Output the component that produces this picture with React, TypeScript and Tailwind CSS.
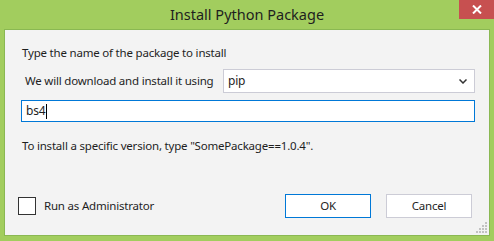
import React from "react";

const font = { fontFamily: '"Noto Sans", "Open Sans", sans-serif' };

export default function App() {
  return (
    <div className="w-[494px] h-[241px] bg-[#a2cd5e] flex flex-col relative overflow-hidden" style={font}>
      <div className="h-[29px] relative flex items-center justify-center">
        <span className="text-[14.5px] leading-[20px] text-[#1e1e1e] -mt-[2px]">Install Python Package</span>
        <div className="absolute right-0 top-0 w-[35px] h-[19px] bg-[#c75050] flex items-center justify-center">
          <svg width="10" height="9" viewBox="0 0 10 9">
            <path d="M1 0.5 L9 8.5 M9 0.5 L1 8.5" stroke="#fff" strokeWidth="2" />
          </svg>
        </div>
      </div>
      <div className="mx-[4px] h-[207px] bg-[#f3f3f3] border border-[#8ab852] flex flex-col relative">
        <div className="pl-[16px] pr-[14px] pt-[15px] flex flex-col text-[11.5px] tracking-[-0.2px] leading-[16px] text-[#1e1e1e]">
          <div className="pl-[1px]">Type the name of the package to install</div>
          <div className="mt-[8px] flex items-center h-[24px]">
            <div className="pl-[4px] w-[202px] whitespace-nowrap">We will download and install it using</div>
            <div className="flex-1 h-[24px] bg-white border border-[#ccccd6] flex items-center justify-between pl-[4px] pr-[7px]">
              <span className="text-[12px]">pip</span>
              <svg width="8" height="5" viewBox="0 0 8 5">
                <path d="M0.5 0.5 L4 4 L7.5 0.5" stroke="#333" strokeWidth="1.5" fill="none" />
              </svg>
            </div>
          </div>
          <div className="mt-[7px] h-[22px] bg-white border border-[#0078d7] flex items-center pl-[4px]">
            <span className="text-[12px]">bs4</span>
            <span className="w-[1px] h-[15px] bg-black ml-[1px]"></span>
          </div>
          <div className="mt-[16px] pl-[1px]">To install a specific version, type "SomePackage==1.0.4".</div>
        </div>
        <div className="mt-auto mb-[17px] pl-[13px] pr-[17px] flex items-center text-[11.5px] tracking-[-0.2px] text-[#1e1e1e]">
          <div className="w-[18px] h-[18px] border border-[#333] bg-white"></div>
          <span className="ml-[8px]">Run as Administrator</span>
          <div className="ml-auto flex gap-[15px]">
            <div className="w-[86px] h-[24px] bg-white border border-[#0078d7] flex items-center justify-center">OK</div>
            <div className="w-[86px] h-[24px] bg-white border border-[#ccccd6] flex items-center justify-center">Cancel</div>
          </div>
        </div>
        <svg className="absolute right-[2px] bottom-[2px]" width="11" height="11" viewBox="0 0 11 11">
          {[
            [9, 0],
            [6, 3], [9, 3],
            [3, 6], [6, 6], [9, 6],
            [0, 9], [3, 9], [6, 9], [9, 9],
          ].map(([x, y], i) => (
            <rect key={i} x={x} y={y} width="2" height="2" fill="#c2c2c2" />
          ))}
        </svg>
      </div>
    </div>
  );
}
